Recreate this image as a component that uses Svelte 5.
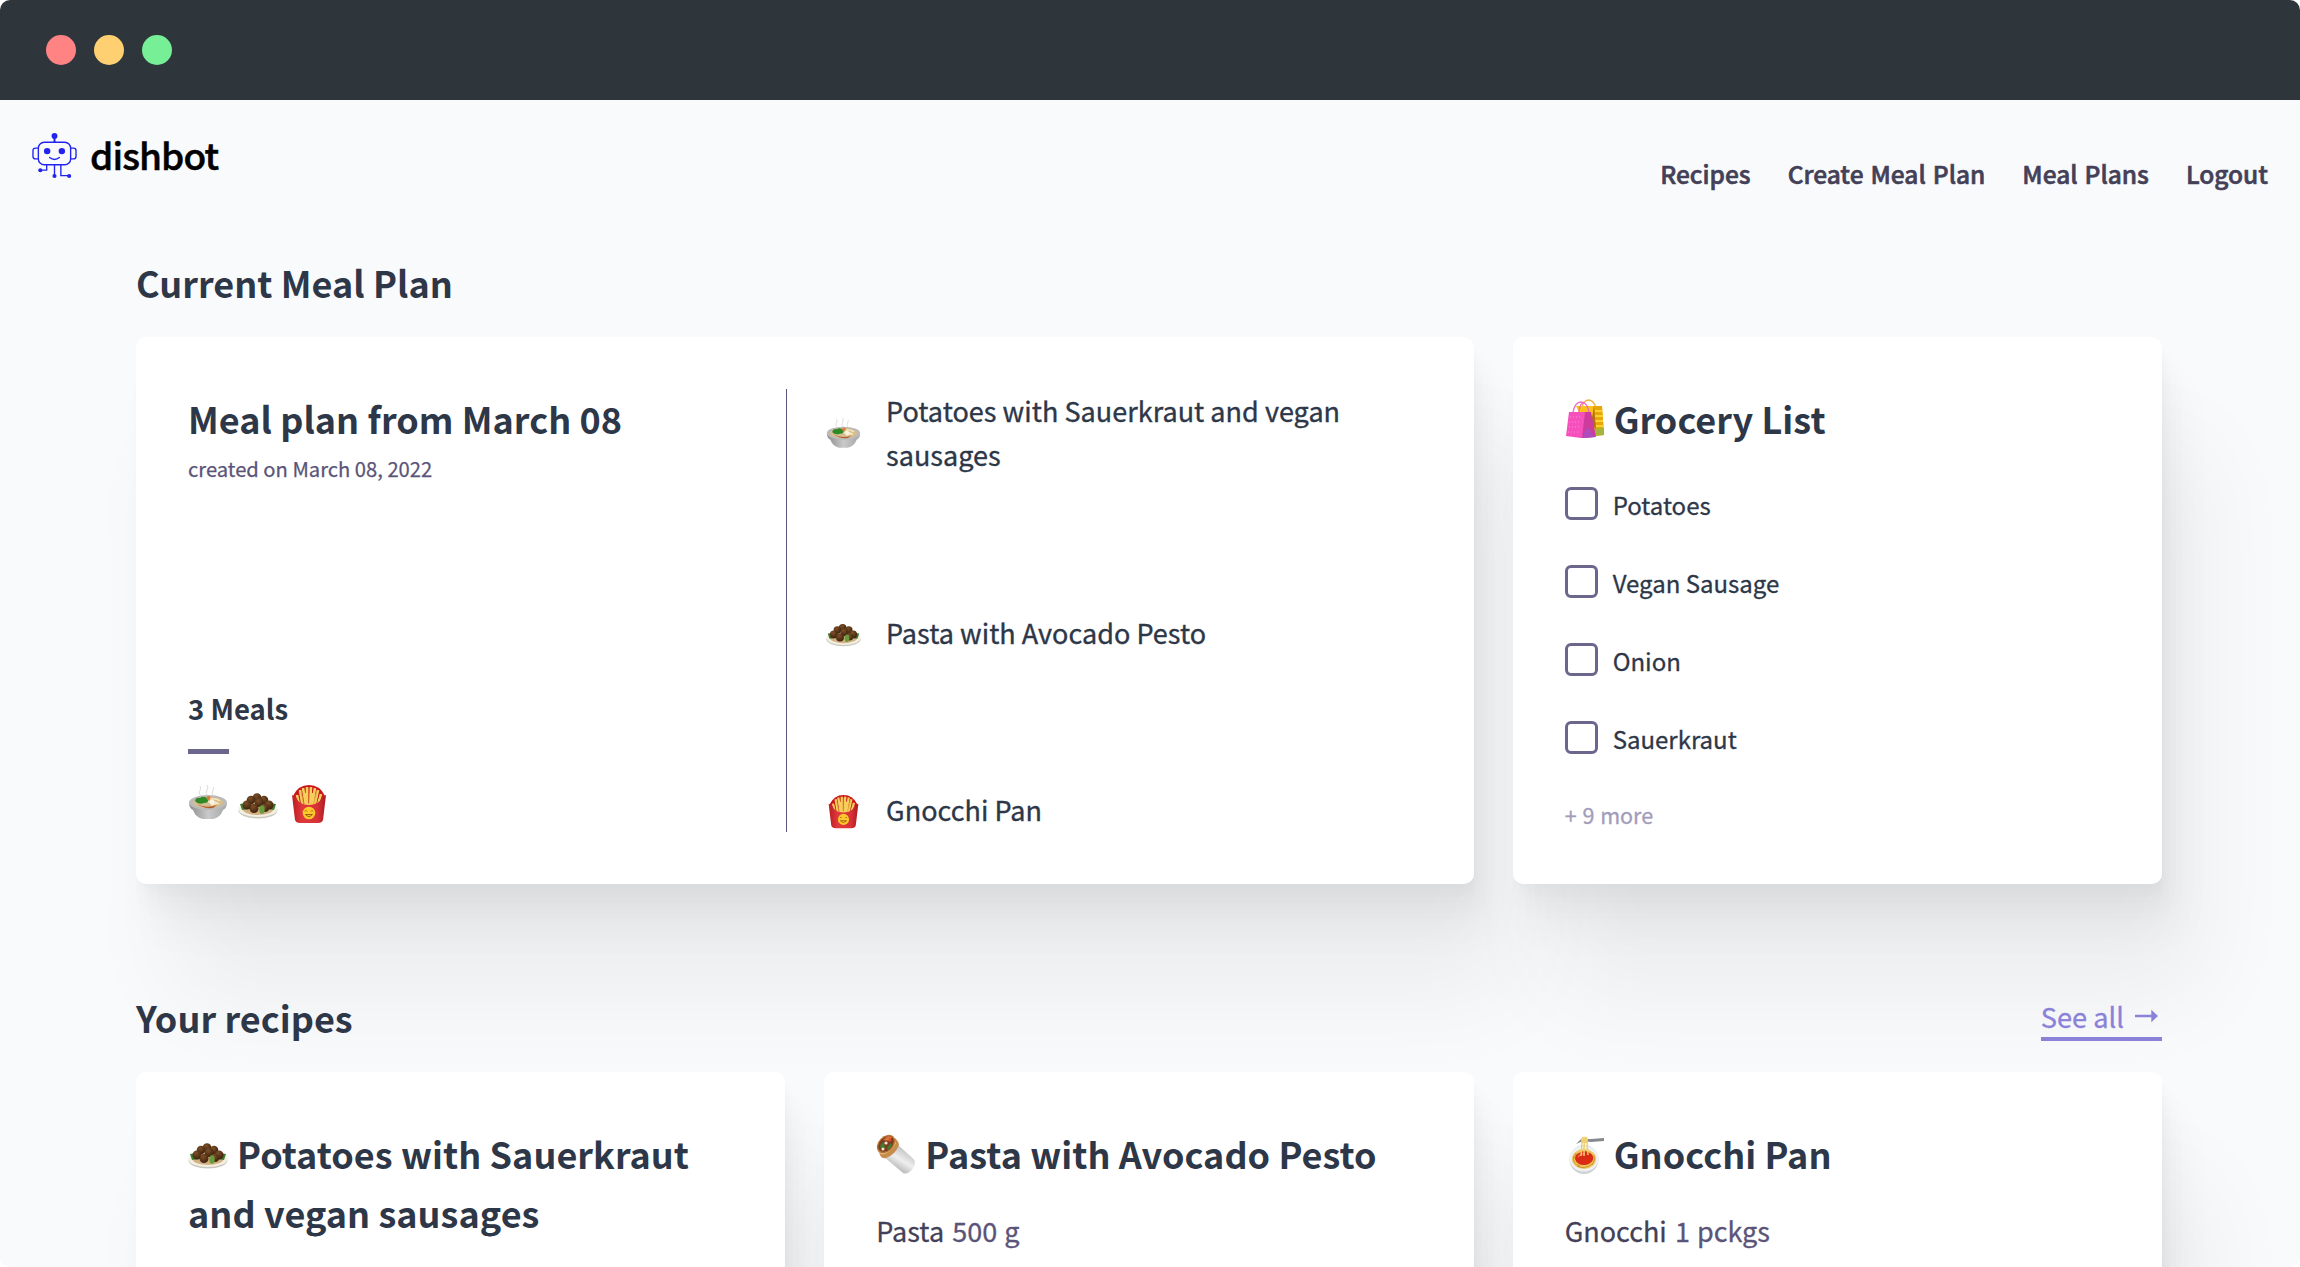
<script>
  const nav = ['Recipes', 'Create Meal Plan', 'Meal Plans', 'Logout'];
  const meals = [
    { icon: 'soup', name: 'Potatoes with Sauerkraut and vegan sausages' },
    { icon: 'falafel', name: 'Pasta with Avocado Pesto' },
    { icon: 'fries', name: 'Gnocchi Pan' }
  ];
  const groceries = ['Potatoes', 'Vegan Sausage', 'Onion', 'Sauerkraut'];
  const recipes = [
    { icon: 'falafel', name: 'Potatoes with Sauerkraut and vegan sausages' },
    { icon: 'burrito', name: 'Pasta with Avocado Pesto', item: 'Pasta', amount: '500 g' },
    { icon: 'spaghetti', name: 'Gnocchi Pan', item: 'Gnocchi', amount: '1 pckgs' }
  ];
</script>

{#snippet pic(name)}
  <svg class="pic" viewBox="0 0 40 40" aria-hidden="true">
    {#if name === 'soup'}
      <path d="M12 11c-3-4 3-5 0-9M19 11c-3-4 3-6 0-10M25 11c-3-3 2-5 0-8" fill="none" stroke="#e2e2e5" stroke-width="1.2" />
      <path d="M1 20q1 5 4 6 3 8 10 9h10q7-1 10-9 3-1 4-6z" fill="url(#steel)" />
      <ellipse cx="20" cy="18.500" rx="19" ry="7.500" fill="#bababa" />
      <ellipse cx="20" cy="18.500" rx="15.500" ry="5.800" fill="#d5bd92" />
      <path d="M9 20q9 5 20 1l-4 3q-9 1-16-4z" fill="#b95a2c" />
      <path d="M22 15q6-1 10 2M20 18q7-1 11 2M23 21l7-2" stroke="#f8e8bd" stroke-width="1.500" fill="none" />
      <path d="M7 17q1-4 5-3 4-3 8 1 1 4-4 4-6 2-9-2z" fill="#2e8a26" />
      <circle cx="20.500" cy="14" r="2" fill="#e07a3a" /><circle cx="24" cy="18" r="2.500" fill="#fbf3e2" />
    {:else if name === 'falafel'}
      <ellipse cx="20" cy="26.500" rx="19.500" ry="8" fill="#c9c7bd" />
      <ellipse cx="20" cy="25.500" rx="19.300" ry="7.500" fill="#f4efe3" />
      <ellipse cx="20" cy="25" rx="15.500" ry="6" fill="#d3b183" />
      <path d="M2 20l6-1 3 6-7 1zM38 20l-6-1-3 6 7 1z" fill="#3d7d2e" />
      <g fill="url(#ball)">
        <circle cx="19" cy="13.500" r="4.300" /><circle cx="13" cy="16" r="4.300" /><circle cx="26" cy="16" r="4.300" />
        <circle cx="9" cy="21" r="4.500" /><circle cx="31" cy="21" r="4.500" /><circle cx="21" cy="18.500" r="4.500" />
        <circle cx="16" cy="24.500" r="4.500" /><circle cx="27" cy="24" r="4" />
      </g>
      <ellipse cx="24" cy="25.500" rx="2.700" ry="4.300" fill="#679b3c" />
    {:else if name === 'fries'}
      <path d="M4 12Q9 1 20 1t16 11l-3 8H7z" fill="#c9161c" />
      <path d="M8 11l3 14M11 6l3 18M14 4l3 18M18 3l0 20M22 3l-1 20M26 4l-3 18M29 6l-4 18M32 10l-4 14M16 9l3 14M24 9l-3 12" stroke="#f6ce5c" stroke-width="2.600" />
      <path d="M12 8l3 13M20 4v16M28 7l-4 15" stroke="#d99a2b" stroke-width=".7" />
      <path d="M3 11l4 2q3 8 13 8t13-8l4-2-3 25q-1 3-5 3H11q-4 0-5-3z" fill="url(#box)" />
      <circle cx="20" cy="29" r="6.300" fill="#ffc82b" />
      <path d="M16 27.500q1-2 2 0m4 0q1-2 2 0M16.500 30.500q3.500 4 7 0z" fill="none" stroke="#925213" stroke-width=".9" />
    {:else if name === 'bags'}
      <path d="M17 9q1-7 6-8 6 0 8 8" fill="none" stroke="#efb347" stroke-width="1.300" />
      <path d="M11 7h26l2 29-14 1z" fill="#fbc318" />
      <path d="M28 7h9l2 29-11 1z" fill="#e8a60b" />
      <path d="M30 12h7M30 17h8M30 22h8M30 27h8M30 32h9" stroke="#ffdf3c" stroke-width="1.600" />
      <path d="M29 8l2 22-5-6z" fill="#b26c14" />
      <path d="M28 30l11-1v7l-12 1z" fill="#a4b43c" />
      <path d="M8 13q2-10 8-10t8 10M14 13q1-10 5-9" fill="none" stroke="#f269c5" stroke-width="1.300" />
      <path d="M4 13h21l5 25-14 1-15-2z" fill="#f650bd" />
      <path d="M20 13h6l5 25-14 1z" fill="#cf3a9d" />
      <path d="M22 28l8 10-13 1z" fill="#ad4dbb" />
      <path d="M5 18h12M4 23h12M4 28h12M3 33h12" stroke="#ff8bd8" stroke-width="1" stroke-dasharray="1 2" />
    {:else if name === 'burrito'}
      <path d="M7 22Q15 20 21 10l16.500 15q3.500 4-1 10-5 6-9.500 4z" fill="url(#foil)" />
      <path d="M1 13l3 8q2 4 6 3 9-3 13-13 0-3-4-7z" fill="#c68c4a" />
      <path d="M1 15q2 7 8 5 8-4 11-11l-3-6z" fill="#e3b77d" />
      <ellipse cx="10" cy="10" rx="10.500" ry="7.500" transform="rotate(-45 10 10)" fill="#b87435" />
      <ellipse cx="10" cy="10" rx="9" ry="6.200" transform="rotate(-45 10 10)" fill="#7b3d1e" />
      <path d="M7 6l5-4 4 1-3 4z" fill="#d9743a" /><path d="M4 12l3-4 2 5-3 4zM11 14l4-5 1 3-4 4z" fill="#3f7f33" />
      <circle cx="10" cy="9" r="1.600" fill="#f3e7d0" /><circle cx="7" cy="15" r="1.500" fill="#f3e7d0" /><circle cx="14" cy="6" r="1.500" fill="#e8432c" />
    {:else if name === 'spaghetti'}
      <circle cx="19" cy="25.500" r="14.500" fill="#cfd1d3" />
      <ellipse cx="19" cy="24.500" rx="14.500" ry="13" fill="#f0f1f2" />
      <ellipse cx="19" cy="25" rx="12" ry="10" fill="#ecc65c" />
      <path d="M9 22q-2 8 6 10M12 32q8 4 15-2M29 21q2 5-2 10M11 19l-3 6" stroke="#c98f2b" stroke-width=".9" fill="none" />
      <path d="M10 25q0-5 4-6 5-4 11 0 4 2 3 7-3 5-9 5-7 0-9-6z" fill="#da2c14" />
      <path d="M13 23q3-4 7-3" stroke="#f6653b" stroke-width="1.500" fill="none" />
      <path d="M16 22Q17 12 17 5M19 22Q19 12 19.500 5M23 21Q22 12 22 5" stroke="#f0cf72" stroke-width="1.500" fill="none" />
      <path d="M11 10l5-5 10 0 13-1v3l-13 1-8-1z" fill="#85888c" /><ellipse cx="19.500" cy="6" rx="3.500" ry="3.200" fill="#f0cf72" />
    {/if}
  </svg>
{/snippet}

<svg class="defs" aria-hidden="true">
  <defs>
    <linearGradient id="steel"><stop offset="0" stop-color="#8b8b8b" /><stop offset=".5" stop-color="#c9c9c9" /><stop offset="1" stop-color="#a5a5a5" /></linearGradient>
    <radialGradient id="ball" cx=".4" cy=".3" r=".7"><stop offset="0" stop-color="#7d5028" /><stop offset="1" stop-color="#3e220d" /></radialGradient>
    <linearGradient id="box"><stop offset="0" stop-color="#b91d22" /><stop offset=".3" stop-color="#e0393c" /><stop offset=".75" stop-color="#d83236" /><stop offset="1" stop-color="#a91a1f" /></linearGradient>
    <linearGradient id="foil" x1=".7" y1=".2" x2=".3" y2=".8"><stop offset="0" stop-color="#c4c4c4" /><stop offset=".5" stop-color="#efefef" /><stop offset="1" stop-color="#b5b5b5" /></linearGradient>
  </defs>
</svg>

<div class="window">
  <div class="titlebar">
    <span class="dot red"></span><span class="dot yellow"></span><span class="dot green"></span>
  </div>

  <header>
    <div class="brand">
      <svg viewBox="0 0 46 48" class="robot" aria-hidden="true">
        <g fill="none" stroke="#2323ef" stroke-width="1.400">
          <rect x="6.500" y="10" width="33" height="23" rx="6" />
          <path d="M6.500 16H3.500q-2.500 0-2.500 2.500v6Q1 27 3.500 27h3M39.500 16h3q2.500 0 2.500 2.500v6Q45 27 42.500 27h-3" />
          <path d="M23 5v5" stroke-width="2" />
          <path d="M18 25.500q5 4 10 0" stroke-linecap="round" />
          <path d="M15 33v5.500H9M23 33v11M29.500 33v11H37" />
        </g>
        <g fill="#2323ef">
          <circle cx="23" cy="3.500" r="3" /><circle cx="15.500" cy="19" r="3.300" /><circle cx="30.500" cy="19" r="3.300" />
          <circle cx="8.500" cy="38.500" r="2.100" /><circle cx="23" cy="44.500" r="2.100" /><circle cx="38" cy="44.500" r="2.100" />
        </g>
      </svg>
      <span>dishbot</span>
    </div>
    <nav>
      {#each nav as item}<a href="#top">{item}</a>{/each}
    </nav>
  </header>

  <main>
    <h2>Current Meal Plan</h2>
    <div class="grid">
      <section class="card plan">
        <div class="summary">
          <div>
            <h1>Meal plan from March 08</h1>
            <p class="created">created on March 08, 2022</p>
          </div>
          <div>
            <h3>3 Meals</h3>
            <div class="bar"></div>
            <div class="pics">
              {#each meals as meal}{@render pic(meal.icon)}{/each}
            </div>
          </div>
        </div>
        <div class="meals">
          {#each meals as meal}
            <div class="meal">{@render pic(meal.icon)}<span>{meal.name}</span></div>
          {/each}
        </div>
      </section>

      <section class="card">
        <h1>{@render pic('bags')}Grocery List</h1>
        <div class="checks">
          {#each groceries as item}
            <label class="check"><input type="checkbox" /><span>{item}</span></label>
          {/each}
        </div>
        <p class="more">+ 9 more</p>
      </section>
    </div>

    <div class="row">
      <h2>Your recipes</h2>
      <a class="see" href="#recipes">
        <span>See all</span>
        <svg viewBox="0 0 24 14" aria-hidden="true"><path d="M0 5.700h17V.5L24 7l-7 6.500V8.300H0z" fill="currentColor" /></svg>
      </a>
    </div>
    <div class="grid">
      {#each recipes as r}
        <section class="card recipe">
          <h1>{@render pic(r.icon)}{r.name}</h1>
          {#if r.item}
            <p class="ingredient"><b>{r.item}</b> <i>{r.amount}</i></p>
          {/if}
        </section>
      {/each}
    </div>
  </main>
</div>

<style>
  :global(body) { background: #fff; }
  .window {
    box-sizing: border-box;
    width: 2300px;
    height: 1267px;
    overflow: hidden;
    border-radius: 10px;
    background: #f9fafc;
    color: #2d3748;
    font-family: 'Noto Sans CJK SC', 'Noto Sans', sans-serif;
  }
  .defs { position: absolute; width: 0; height: 0; }
  h1, h2, h3, p { margin: 0; }
  a { color: inherit; text-decoration: none; }
  .titlebar { display: flex; align-items: center; gap: 18px; height: 100px; padding-left: 46px; background: #2e363c; }
  .dot { width: 30px; height: 30px; border-radius: 50%; flex: none; }
  .red { background: #ff8383; }
  .yellow { background: #ffd072; }
  .green { background: #76ef96; }

  header { display: flex; justify-content: space-between; height: 153px; padding: 0 32px; box-sizing: border-box; }
  .brand { display: flex; padding-top: 30px; color: #000; font-size: 37px; font-weight: 500; line-height: 48px; letter-spacing: -0.9px; -webkit-text-stroke: 0.5px #000; }
  .robot { width: 45px; height: 48px; margin: 2px 13px 0 0; }
  nav { display: flex; gap: 37px; padding-top: 56px; color: #434057; font-size: 24.5px; font-weight: 500; line-height: 36px; word-spacing: 1.5px; -webkit-text-stroke: 0.6px #434057; }

  main { padding: 0 138px 0 136px; }
  h1, h2 { font-size: 36px; font-weight: 700; line-height: 58.5px; letter-spacing: 0.05px; }
  .grid { display: grid; grid-template-columns: repeat(3, 1fr); gap: 39px; margin-top: 25.5px; }
  .card {
    box-sizing: border-box;
    height: 547px;
    padding: 52px;
    border-radius: 10px;
    background: #fff;
    box-shadow:
      1px 3px 3px rgba(0, 0, 0, 0.01),
      4px 10px 10px rgba(0, 0, 0, 0.015),
      9px 24px 22px rgba(0, 0, 0, 0.025),
      17px 45px 42px rgba(0, 0, 0, 0.035),
      40px 110px 100px rgba(0, 0, 0, 0.055);
  }
  .plan { grid-column: span 2; display: flex; }
  .summary { display: flex; flex-direction: column; justify-content: space-between; width: 599px; border-right: 1.5px solid #5a5478; box-sizing: border-box; }
  .created { margin-top: 6px; color: #5a5478; font-size: 20.2px; line-height: 30px; -webkit-text-stroke: 0.25px #5a5478; }
  h3 { font-size: 27.5px; line-height: 42px; }
  .bar { width: 41px; height: 5px; margin: 20px 0 30px; background: #6b668c; }
  .pics { display: flex; gap: 10px; height: 48px; }
  .pic { width: 40px; height: 40px; }
  .pics .pic:last-child { margin-left: 1px; }
  .meals { display: flex; flex: 1; flex-direction: column; justify-content: space-between; padding-left: 39px; }
  .meal { display: flex; align-items: center; font-size: 27px; line-height: 44px; letter-spacing: 0.03px; -webkit-text-stroke: 0.35px #2d3748; }
  .meal .pic { width: 35px; height: 35px; margin: 2px 25px 0 0; flex: none; }
  h1 .pic { margin-right: 9px; vertical-align: -5px; }

  .checks { display: flex; flex-direction: column; gap: 42px; margin-top: 39px; }
  .check { display: flex; height: 36px; font-size: 24px; line-height: 36px; -webkit-text-stroke: 0.3px #2d3748; }
  input { appearance: none; box-sizing: border-box; width: 33px; height: 33px; margin: 0 15px 0 0; border: 3px solid #6b668c; border-radius: 6px; }
  .more { margin-top: 42px; color: #a29cbb; font-size: 21.5px; line-height: 32px; word-spacing: 1px; -webkit-text-stroke: 0.3px #a29cbb; }

  .row { display: flex; justify-content: space-between; align-items: flex-start; margin-top: 104px; }
  .see { display: flex; align-items: center; gap: 11px; margin-top: 7px; padding-right: 4px; border-bottom: 4px solid #8a82d8; color: #8a82d8; font-size: 27.2px; line-height: 42px; -webkit-text-stroke: 0.3px #8a82d8; }
  .see svg { width: 23px; height: 14px; }
  .ingredient { margin-top: 26px; color: #434057; font-size: 27px; line-height: 44px; -webkit-text-stroke: 0.3px; }
  b, i { font-weight: 400; font-style: normal; }
  i { margin-left: 2px; color: #5a5478; word-spacing: 1px; }
</style>
